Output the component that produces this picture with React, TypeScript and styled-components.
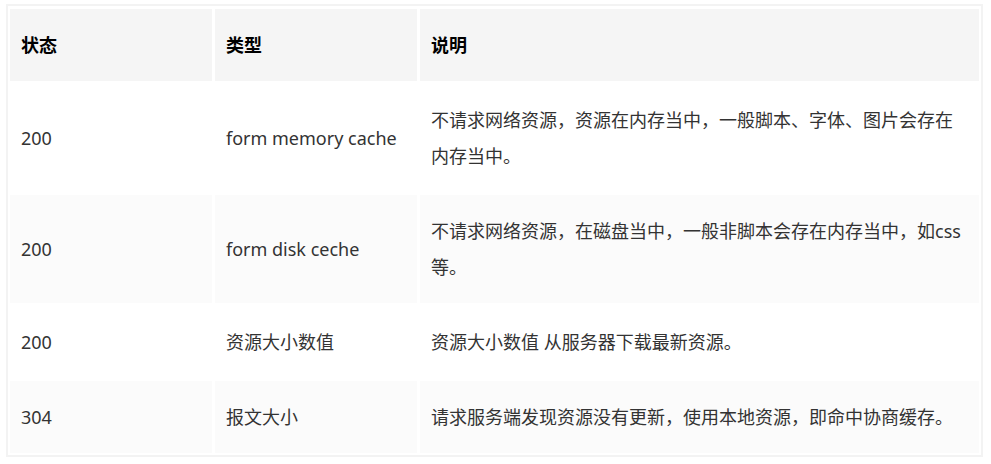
import React from "react";
import styled, { createGlobalStyle } from "styled-components";

const GlobalStyle = createGlobalStyle`
  html, body {
    margin: 0;
    padding: 0;
    background: #ffffff;
  }
  body {
    font-family: "Noto Sans", "Noto Sans CJK SC", sans-serif;
  }
`;

const Page = styled.div`
  padding: 4px 8px 0 6px;
`;

const Table = styled.div`
  display: grid;
  grid-template-columns: 202px 202px 559px;
  gap: 3px;
  padding: 3px 2px 2px 2px;
  border: 2px solid #f3f3f3;
  width: max-content;
`;

const Row = styled.div`
  display: contents;
`;

const Cell = styled.div<{ $bg: string; $head?: boolean }>`
  background: ${(p) => p.$bg};
  padding: 18px 12px 18px 11px;
  font-size: 18px;
  line-height: 36px;
  color: ${(p) => (p.$head ? "#000000" : "#333333")};
  font-weight: ${(p) => (p.$head ? 700 : 400)};
  display: flex;
  align-items: center;
`;

const Text = styled.span`
  display: block;
`;

const rows = [
  ["200", "form memory cache", "不请求网络资源，资源在内存当中，一般脚本、字体、图片会存在内存当中。"],
  ["200", "form disk ceche", "不请求网络资源，在磁盘当中，一般非脚本会存在内存当中，如css等。"],
  ["200", "资源大小数值", "资源大小数值 从服务器下载最新资源。"],
  ["304", "报文大小", "请求服务端发现资源没有更新，使用本地资源，即命中协商缓存。"],
];

export default function App() {
  return (
    <>
      <GlobalStyle />
      <Page>
        <Table>
          <Row>
            {["状态", "类型", "说明"].map((h) => (
              <Cell key={h} $bg="#f5f5f5" $head>
                <Text>{h}</Text>
              </Cell>
            ))}
          </Row>
          {rows.map((r, i) => (
            <Row key={i}>
              {r.map((c, j) => (
                <Cell key={j} $bg={i % 2 === 0 ? "#ffffff" : "#fbfbfb"}>
                  <Text>{c}</Text>
                </Cell>
              ))}
            </Row>
          ))}
        </Table>
      </Page>
    </>
  );
}
